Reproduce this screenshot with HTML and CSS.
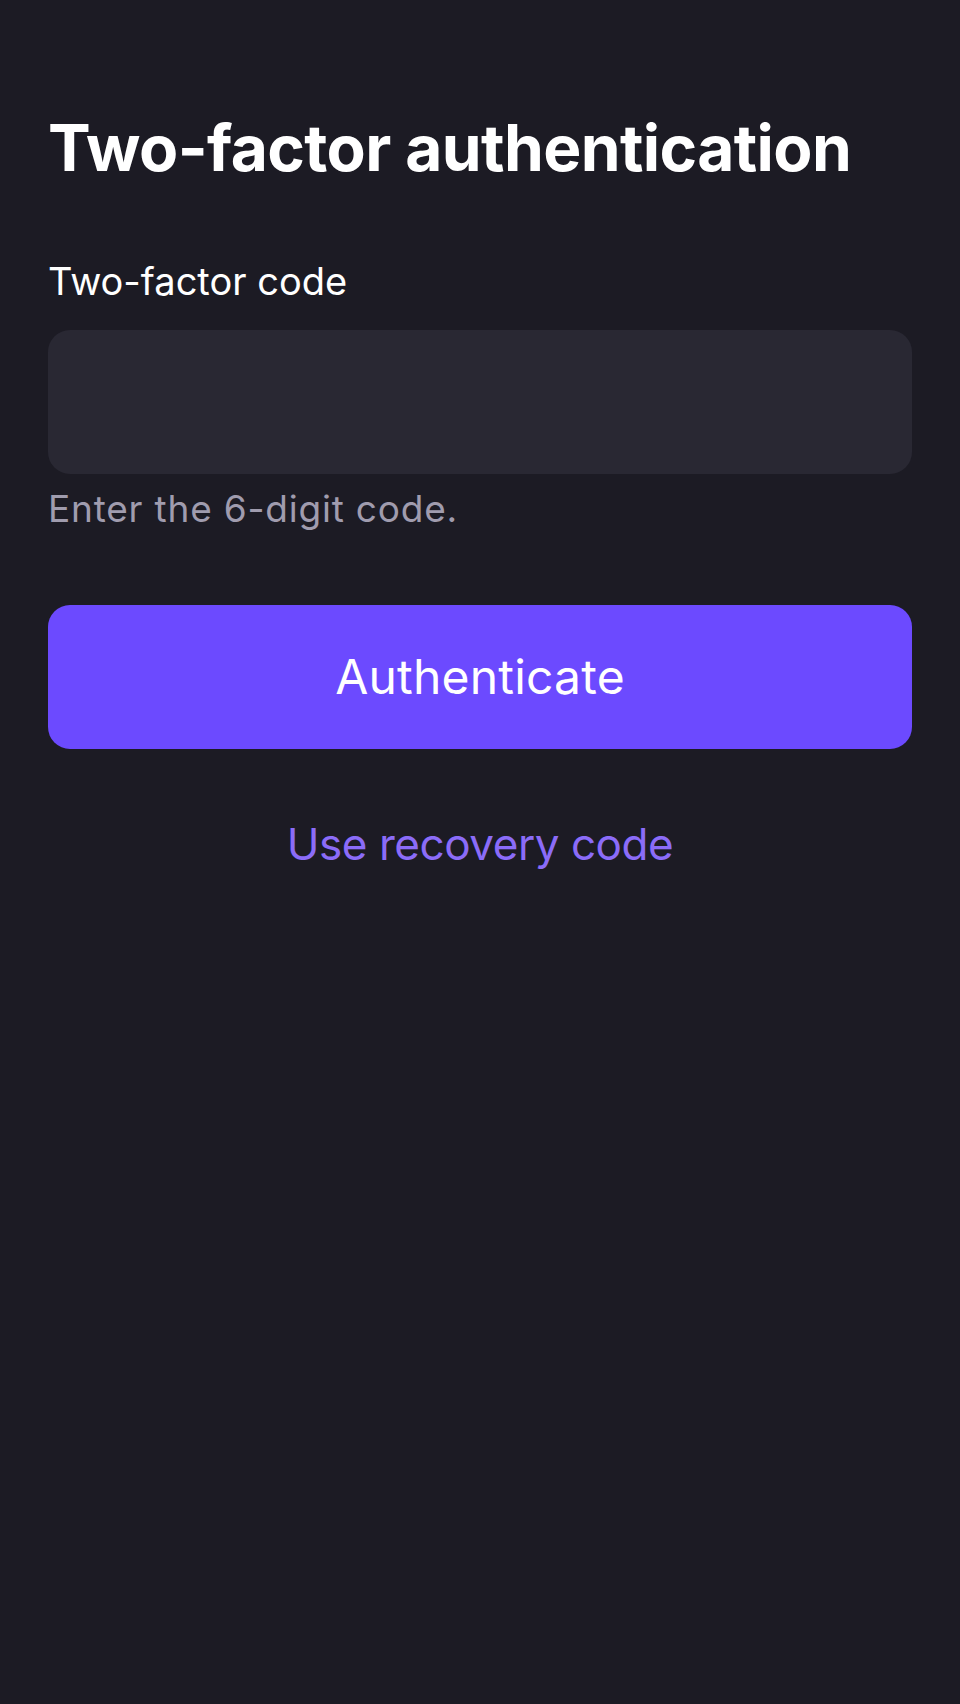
FILE: index.html
```html
<!DOCTYPE html>
<html lang="en">
<head>
<meta charset="utf-8">
<title>Two-factor authentication</title>
<link rel="stylesheet" href="styles.css">
</head>
<body>
<main class="screen">
  <h1 class="title">Two-factor authentication</h1>
  <form class="form">
    <label class="label" for="code">Two-factor code</label>
    <input class="input" id="code" type="text" inputmode="numeric" autocomplete="one-time-code">
    <p class="hint">Enter the 6-digit code.</p>
    <button class="btn" type="button">Authenticate</button>
    <a class="link" href="#">Use recovery code</a>
  </form>
</main>
</body>
</html>
```

FILE: styles.css
```css
html, body {
  margin: 0;
  padding: 0;
  background: #1c1b24;
}
body {
  font-family: Inter, "Noto Sans", "Liberation Sans", sans-serif;
  color: #ffffff;
  min-height: 1704px;
}
.screen {
  padding: 110px 48px 0 48px;
}
.title {
  margin: 0;
  font-size: 64px;
  line-height: 76px;
  font-weight: 700;
  letter-spacing: -0.6px;
}
.form {
  display: flex;
  flex-direction: column;
  margin-top: 72px;
}
.label {
  font-size: 38px;
  line-height: 46px;
  font-weight: 400;
}
.input {
  margin-top: 26px;
  height: 144px;
  box-sizing: border-box;
  border: 0;
  border-radius: 22px;
  background: #292833;
  color: #fff;
  font: inherit;
  font-size: 40px;
  padding: 0 24px;
  outline: none;
}
.hint {
  margin: 13px 0 0;
  font-size: 37px;
  line-height: 44px;
  letter-spacing: 0.8px;
  color: #a09cae;
}
.btn {
  margin-top: 74px;
  height: 144px;
  border: 0;
  border-radius: 22px;
  background: #6c4aff;
  color: #ffffff;
  font-family: inherit;
  font-size: 48px;
  line-height: 144px;
  font-weight: 400;
  letter-spacing: 0.2px;
  padding: 0;
  cursor: pointer;
}
.link {
  margin-top: 69px;
  align-self: center;
  font-size: 44px;
  line-height: 52px;
  letter-spacing: -0.45px;
  color: #8b6cf8;
  text-decoration: none;
}
```
